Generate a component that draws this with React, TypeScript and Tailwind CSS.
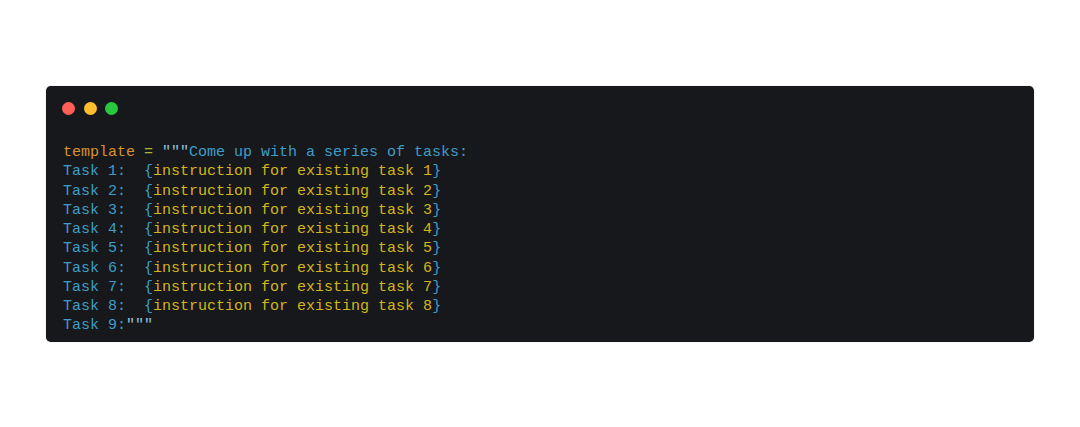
import React from 'react'

const tasks = [1, 2, 3, 4, 5, 6, 7, 8]

const App = () => {
    return (
        <div className='w-[1080px] h-[427px] bg-white pt-[86px] pl-[46px]'>
            <div className='w-[988px] h-[256px] bg-[#17181b] rounded-[5px] pl-[17px] pt-[16px] shadow-[0_0_1px_rgba(0,0,0,0.4)]'>
                {/* window dots */}
                <div className='flex gap-[8.5px] ml-[-1px]'>
                    <span className='w-[13px] h-[13px] rounded-full bg-[#fe5f57]' />
                    <span className='w-[13px] h-[13px] rounded-full bg-[#febc2e]' />
                    <span className='w-[13px] h-[13px] rounded-full bg-[#28c840]' />
                </div>
                <pre className='mt-[28px] text-[15px] leading-[19.25px]' style={{ fontFamily: '"Liberation Mono", "DejaVu Sans Mono", monospace' }}>
                    <span className='text-[#d8922e]'>template</span>
                    <span className='text-[#a9b43a]'> = </span>
                    <span className='text-[#8fc3dc]'>"""</span>
                    <span className='text-[#3f9dc7]'>Come up with a series of tasks:</span>
                    {'\n'}
                    {tasks.map((n) => (
                        <React.Fragment key={n}>
                            <span className='text-[#3f9dc7]'>Task {n}:  {'{'}</span>
                            <span className='text-[#d2b51c]'>instruction for existing task {n}</span>
                            <span className='text-[#3f9dc7]'>{'}'}</span>
                            {'\n'}
                        </React.Fragment>
                    ))}
                    <span className='text-[#3f9dc7]'>Task 9:</span>
                    <span className='text-[#8fc3dc]'>"""</span>
                </pre>
            </div>
        </div>
    )
}

export default App
